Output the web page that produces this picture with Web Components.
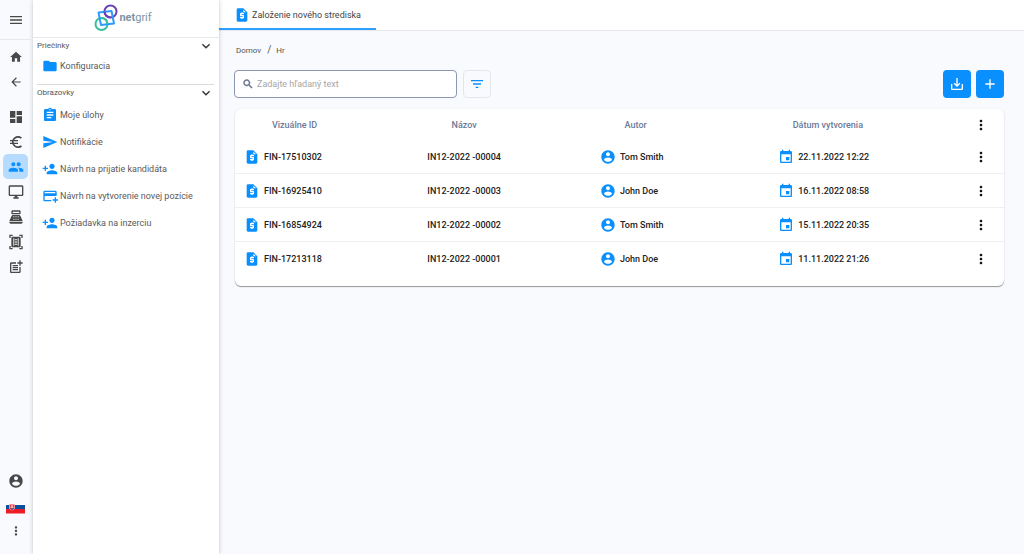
<!DOCTYPE html>
<html lang="sk">
<head>
<meta charset="utf-8">
<title>Netgrif – Založenie nového strediska</title>
<meta name="viewport" content="width=device-width, initial-scale=1">
<style>
  body {
    margin: 0;
    font: 400 9px/12px Roboto, sans-serif;
    color: #555;
    background: #f8fafd;
    --blue: #0a8fff;
    --page: #f8fafd;
    --line: #e6e8ec;
  }
</style>
</head>
<body>
<ng-app></ng-app>

<script>
const ICONS = {
  menu: 'M3 18h18v-2H3v2zm0-5h18v-2H3v2zm0-7v2h18V6H3z',
  home: 'M10 20v-6h4v6h5v-8h3L12 3 2 12h3v8z',
  back: 'M20 11H7.83l5.59-5.59L12 4l-8 8 8 8 1.41-1.41L7.83 13H20v-2z',
  dashboard: 'M3 13h8V3H3v10zm0 8h8v-6H3v6zm10 0h8V11h-8v10zm0-18v6h8V3h-8z',
  euro: 'M15 18.5c-2.51 0-4.68-1.42-5.76-3.5H15v-2H8.58c-.05-.33-.08-.66-.08-1s.03-.67.08-1H15V9H9.24C10.32 6.92 12.5 5.5 15 5.5c1.61 0 3.09.59 4.23 1.57L21 5.3C19.41 3.87 17.3 3 15 3c-3.92 0-7.24 2.51-8.48 6H3v2h3.06c-.04.33-.06.66-.06 1s.02.67.06 1H3v2h3.52c1.24 3.49 4.56 6 8.48 6 2.31 0 4.41-.87 6-2.3l-1.78-1.77c-1.13.98-2.6 1.57-4.22 1.57z',
  people: 'M16 11c1.66 0 2.99-1.34 2.99-3S17.66 5 16 5s-3 1.34-3 3 1.34 3 3 3zm-8 0c1.66 0 2.99-1.34 2.99-3S9.66 5 8 5 5 6.34 5 8s1.34 3 3 3zm0 2c-2.33 0-7 1.17-7 3.5V19h14v-2.5c0-2.33-4.67-3.5-7-3.5zm8 0c-.29 0-.62.02-.97.05 1.16.84 1.97 1.97 1.97 3.45V19h6v-2.5c0-2.33-4.67-3.5-7-3.5z',
  desktop: 'M21 2H3c-1.1 0-2 .9-2 2v12c0 1.1.9 2 2 2h7v2H8v2h8v-2h-2v-2h7c1.1 0 2-.9 2-2V4c0-1.1-.9-2-2-2zm0 14H3V4h18v12z',
  register: 'M17 2H7c-1.1 0-2 .9-2 2v2c0 1.1.9 2 2 2h10c1.1 0 2-.9 2-2V4c0-1.1-.9-2-2-2zm0 4H7V4h10v2zm3 16H4c-1.1 0-2-.9-2-2v-1h20v1c0 1.1-.9 2-2 2zm-1.47-11.81C18.21 9.47 17.49 9 16.7 9H7.3c-.79 0-1.51.47-1.83 1.19L2 18h20l-3.47-7.81zM8 11h1.500v1H8zm0 2h1.500v1H8zm0 2h1.500v1H8zm3.250-4h1.500v1h-1.500zm0 2h1.500v1h-1.500zm0 2h1.500v1h-1.500zM14.500 11H16v1h-1.500zm0 2H16v1h-1.500zm0 2H16v1h-1.500z',
  scanner: 'M7 3H4v3H2V1h5v2zm15 3V1h-5v2h3v3h2zM7 21H4v-3H2v5h5v-2zm13-3v3h-3v2h5v-5h-2zM7 4h10c1.100 0 2 .9 2 2v12c0 1.100-.9 2-2 2H7c-1.100 0-2-.9-2-2V6c0-1.100.9-2 2-2zm1 2.500v11h1.200v-11H8zm6.800 0v11H16v-11h-1.200zM10 8v1.200h4V8h-4zm0 3.400v1.200h4v-1.200h-4zm0 3.400V16h4v-1.200h-4z',
  postAdd: 'M17 19.220H5V7h7V5H5c-1.100 0-2 .9-2 2v12c0 1.100.9 2 2 2h12c1.100 0 2-.9 2-2v-7h-2v7.220zM19 2h-2v3h-3v2h3v3h2V7h3V5h-3V2zM7 9h8v2H7zm0 3h8v2H7zm0 3h8v2H7z',
  account: 'M12 2C6.480 2 2 6.480 2 12s4.480 10 10 10 10-4.480 10-10S17.520 2 12 2zm0 3c1.660 0 3 1.340 3 3s-1.340 3-3 3-3-1.340-3-3 1.340-3 3-3zm0 14.200c-2.500 0-4.710-1.280-6-3.220.03-1.990 4-3.080 6-3.080 1.990 0 5.970 1.090 6 3.080-1.290 1.940-3.500 3.220-6 3.220z',
  more: 'M12 8c1.100 0 2-.9 2-2s-.9-2-2-2-2 .9-2 2 .9 2 2 2zm0 2c-1.100 0-2 .9-2 2s.9 2 2 2 2-.9 2-2-.9-2-2-2zm0 6c-1.100 0-2 .9-2 2s.9 2 2 2 2-.9 2-2-.9-2-2-2z',
  expand: 'M16.590 8.590L12 13.170 7.410 8.590 6 10l6 6 6-6z',
  folder: 'M10 4H4c-1.100 0-1.990.9-1.990 2L2 18c0 1.100.9 2 2 2h16c1.100 0 2-.9 2-2V8c0-1.100-.9-2-2-2h-8l-2-2z',
  tasks: 'M19 3h-4.180C14.400 1.840 13.300 1 12 1s-2.400.84-2.820 2H5c-1.100 0-2 .9-2 2v14c0 1.100.9 2 2 2h14c1.100 0 2-.9 2-2V5c0-1.100-.9-2-2-2zm-7 0c.55 0 1 .45 1 1s-.45 1-1 1-1-.45-1-1 .45-1 1-1zm2 14H7v-2h7v2zm3-4H7v-2h10v2zm0-4H7V7h10v2z',
  send: 'M2.010 21L23 12 2.010 3 2 10l15 2-15 2z',
  personAdd: 'M15 12c2.210 0 4-1.790 4-4s-1.790-4-4-4-4 1.790-4 4 1.790 4 4 4zm-9-2V7H4v3H1v2h3v3h2v-3h3v-2H6zm9 4c-2.670 0-8 1.340-8 4v2h16v-2c0-2.660-5.330-4-8-4z',
  cardAdd: 'M20 4H4c-1.110 0-1.990.89-1.990 2L2 18c0 1.110.89 2 2 2h10v-2H4v-6h18V6c0-1.110-.89-2-2-2zm0 4H4V6h16v2zm4 9v2h-3v3h-2v-3h-3v-2h3v-3h2v3h3z',
  page: 'M14 2H6c-1.100 0-1.990.9-1.990 2L4 20c0 1.100.89 2 1.990 2H18c1.100 0 2-.9 2-2V8l-6-6zm1 9h-4v1h3c.55 0 1 .45 1 1v3c0 .55-.45 1-1 1h-1v1h-2v-1H9v-2h4v-1h-3c-.55 0-1-.45-1-1v-3c0-.55.45-1 1-1h1V8h2v1h2v2zm-1-3V4l4 4h-4z',
  event: 'M17 12h-5v5h5v-5zM16 1v2H8V1H6v2H5c-1.110 0-1.990.9-1.990 2L3 19c0 1.100.89 2 2 2h14c1.100 0 2-.9 2-2V5c0-1.100-.9-2-2-2h-1V1h-2zm3 18H5V8h14v11z',
  search: 'M15.500 14h-.79l-.28-.27C15.410 12.590 16 11.110 16 9.500 16 5.910 13.090 3 9.500 3S3 5.910 3 9.500 5.910 16 9.500 16c1.610 0 3.090-.59 4.230-1.570l.27.28v.79l5 4.990L20.490 19l-4.990-5zm-6 0C7.010 14 5 11.990 5 9.500S7.010 5 9.500 5 14 7.010 14 9.500 11.990 14 9.500 14z',
  filter: 'M10 18h4v-2h-4v2zM3 6v2h18V6H3zm3 7h12v-2H6v2z',
  save: 'M19 12v7H5v-7H3v7c0 1.100.9 2 2 2h14c1.100 0 2-.9 2-2v-7h-2zm-6 .67l2.590-2.580L17 11.500l-5 5-5-5 1.410-1.410L11 12.670V3h2z',
  add: 'M19 13h-6v6h-2v-6H5v-2h6V5h2v6h6v2z'
};

function define(name, render) {
  customElements.define(name, class extends HTMLElement {
    connectedCallback() {
      if (this.shadowRoot) return;
      this.attachShadow({ mode: 'open' }).innerHTML = render(this);
    }
  });
}

/* Filled 24-unit glyph; its size comes from --size, its colour from the text colour. */
define('ng-icon', el => `
  <style>
    :host { display: block; flex: none; width: var(--size, 16px); height: var(--size, 16px); }
    svg { display: block; width: 100%; height: 100%; fill: currentColor; }
    :host([bold]) svg { stroke: currentColor; stroke-width: .8; }
  </style>
  <svg viewBox="0 0 24 24" aria-hidden="true"><path fill-rule="evenodd" d="${ICONS[el.getAttribute('name')]}"/></svg>`);

define('ng-rail-button', el => `
  <style>
    :host { display: block; --size: 14px; }
    button {
      display: grid; place-items: center; width: 25px; height: 25px; padding: 0;
      border: 0; border-radius: 5px; background: none; color: #484848; cursor: pointer;
    }
    :host([wide]) { --size: 16px; }
    :host([active]) button { background: #b5dcff; color: var(--blue); }
  </style>
  <button type="button" aria-label="${el.getAttribute('label')}"><slot></slot></button>`);

define('ng-flag', () => `
  <style>:host { display: block; } svg { display: block; width: 19px; height: 10px; }</style>
  <svg viewBox="0 0 19 10" role="img" aria-label="Slovensko">
    <path fill="#fff" d="M0 0h19v3H0z"/><path fill="#0b4ea2" d="M0 1h19v5H0z"/><path fill="#ee1c25" d="M0 5h19v4.500H0z"/>
    <path fill="#fff" d="M3 0h6v3.200q0 2-3 3.300-3-1.300-3-3.300z"/>
    <path fill="#ee1c25" d="M3.500.4h5v2.800q0 1.600-2.500 2.700-2.500-1.100-2.500-2.700z"/>
    <path stroke="#fff" stroke-width=".7" d="M6 1v4M4.800 2h2.400M4.400 3.300h3.200"/>
    <path fill="#0b4ea2" d="M4.300 4.700q.8-1 1.700-.1.900-.9 1.700.1L6 5.900z"/>
  </svg>`);

define('ng-rail', () => `
  <style>
    :host { display: flex; flex-direction: column; align-items: center; padding-right: 2px; background: var(--page); }
    header { align-self: stretch; display: flex; justify-content: center; padding: 7px 0; border-bottom: 1px solid var(--line); }
    nav { display: grid; justify-items: center; }
    .top { margin-top: 4px; }
    .apps { margin-top: 10px; }
    .user { margin-top: auto; padding-bottom: 11px; }
    .lang { display: grid; place-items: center; height: 25px; padding: 6px 0 0; border: 0; background: none; }
  </style>
  <header><ng-rail-button wide label="Menu"><ng-icon name="menu"></ng-icon></ng-rail-button></header>
  <nav class="top" aria-label="Navigácia">
    <ng-rail-button label="Domov"><ng-icon name="home"></ng-icon></ng-rail-button>
    <ng-rail-button label="Späť"><ng-icon name="back"></ng-icon></ng-rail-button>
  </nav>
  <nav class="apps" aria-label="Aplikácie">
    <ng-rail-button wide label="Prehľad"><ng-icon name="dashboard"></ng-icon></ng-rail-button>
    <ng-rail-button wide label="Financie"><ng-icon name="euro"></ng-icon></ng-rail-button>
    <ng-rail-button wide active label="Ľudia"><ng-icon name="people"></ng-icon></ng-rail-button>
    <ng-rail-button wide label="Počítače"><ng-icon name="desktop"></ng-icon></ng-rail-button>
    <ng-rail-button wide label="Pokladňa"><ng-icon name="register"></ng-icon></ng-rail-button>
    <ng-rail-button wide label="Skenovanie"><ng-icon name="scanner"></ng-icon></ng-rail-button>
    <ng-rail-button wide label="Nový záznam"><ng-icon name="postAdd"></ng-icon></ng-rail-button>
  </nav>
  <nav class="user" aria-label="Používateľ">
    <ng-rail-button wide label="Profil"><ng-icon name="account"></ng-icon></ng-rail-button>
    <button class="lang" type="button" aria-label="Jazyk"><ng-flag></ng-flag></button>
    <ng-rail-button label="Viac"><ng-icon name="more"></ng-icon></ng-rail-button>
  </nav>`);

define('ng-logo', () => `
  <style>
    :host { display: flex; align-items: center; gap: 1px; font-size: 11px; line-height: 16px; color: #7d95a3; }
    svg { display: block; width: 24px; height: 28px; fill: none; stroke-width: 2; }
    b { font-weight: 700; }
  </style>
  <svg viewBox="0 0 24 28" aria-hidden="true">
    <circle cx="16.500" cy="7.500" r="6" stroke="#6a3fb5"/>
    <circle cx="7.500" cy="20" r="6" stroke="#38bfa0"/>
    <path stroke="#2f9bff" stroke-linejoin="round" d="M4.500 8.500L17.500 7l2.500 12.500L7 21z"/>
    <path stroke="#6a3fb5" d="M10.500 7.500a6 6 0 0 0 6 6"/>
    <path stroke="#38bfa0" d="M13.500 20a6 6 0 0 0-6-6"/>
  </svg>
  <span><b>net</b>grif</span>`);

define('ng-nav-link', el => `
  <style>
    :host { display: block; }
    a { display: flex; align-items: center; gap: 2px; padding: 0 0 0 5px; height: var(--row, 27px); color: #5a5a5a; text-decoration: none; }
    ng-icon { color: var(--blue); }
  </style>
  <a href="#"><ng-icon name="${el.getAttribute('icon')}"></ng-icon><slot></slot></a>`);

define('ng-nav-group', el => `
  <style>
    :host { display: block; margin: 0 5px 0 4px; }
    button {
      display: flex; align-items: center; justify-content: space-between; width: 100%; height: 15px;
      padding: 0; border: 0; background: none; color: #555; font: inherit; font-size: 8px;
    }
    ng-icon { color: #333; }
  </style>
  <button type="button" aria-expanded="true">${el.getAttribute('label')}<ng-icon name="expand"></ng-icon></button>
  <slot></slot>`);

define('ng-sidebar', () => `
  <style>
    :host { display: block; position: relative; background: #fff; box-shadow: 0 0 4px rgba(40, 50, 70, .28); }
    header { display: flex; justify-content: center; padding: 4px 6px 5px 0; border-bottom: 1px solid var(--line); }
    .folders { --row: 26px; padding-bottom: 5px; border-bottom: 1px solid #dcdcdc; }
    .views { --row: 27px; }
    .views ng-nav-link:first-of-type { padding-top: 1px; }
  </style>
  <header><ng-logo></ng-logo></header>
  <nav>
    <ng-nav-group class="folders" label="Priečinky"><ng-nav-link icon="folder">Konfiguracia</ng-nav-link></ng-nav-group>
    <ng-nav-group class="views" label="Obrazovky">
      <ng-nav-link icon="tasks">Moje úlohy</ng-nav-link>
      <ng-nav-link icon="send">Notifikácie</ng-nav-link>
      <ng-nav-link icon="personAdd">Návrh na prijatie kandidáta</ng-nav-link>
      <ng-nav-link icon="cardAdd">Návrh na vytvorenie novej pozície</ng-nav-link>
      <ng-nav-link icon="personAdd">Požiadavka na inzerciu</ng-nav-link>
    </ng-nav-group>
  </nav>`);

define('ng-tabs', () => `
  <style>
    :host { display: flex; height: 30px; background: #fff; border-bottom: 1px solid var(--line); }
    button {
      display: flex; align-items: center; gap: 2px; padding: 2px 15px 0; border: 0;
      border-bottom: 2px solid #2f9fff; background: none; color: #444; font: inherit;
    }
    ng-icon { color: var(--blue); }
  </style>
  <button type="button" role="tab" aria-selected="true"><ng-icon name="page"></ng-icon><slot></slot></button>`);

define('ng-breadcrumb', () => `
  <style>
    :host { display: block; font-size: 8px; }
    ol { display: flex; align-items: baseline; gap: 6px; margin: 0; padding: 0 0 0 2px; list-style: none; }
    a { color: inherit; text-decoration: none; }
    li + li::before { content: "/"; padding-right: 5px; font-size: 10px; line-height: 10px; }
  </style>
  <nav aria-label="Cesta"><ol><li><a href="#">Domov</a></li><li><a href="#">Hr</a></li></ol></nav>`);

define('ng-toolbar', () => `
  <style>
    :host { display: flex; align-items: center; gap: 6px; }
    .search {
      display: flex; align-items: center; gap: 3px; box-sizing: border-box; width: 29%; height: 28px;
      padding: 0 6px 0 7px; border: 1px solid #8b97b0; border-radius: 4px; background: #fff; color: #5c6b8a; --size: 12px;
    }
    input { flex: 1; min-width: 0; padding: 0; border: 0; outline: 0; background: none; font: inherit; color: #333; }
    input::placeholder { color: #a6a6a6; opacity: 1; }
    button {
      display: grid; place-items: center; width: 28px; height: 28px; padding: 0; border: 0;
      border-radius: 4px; background: var(--blue); color: #fff;
    }
    .filter { border: 1px solid #e3e6ec; background: var(--page); color: var(--blue); }
    .actions { display: flex; gap: 5px; margin-left: auto; }
  </style>
  <label class="search"><ng-icon bold name="search"></ng-icon><input type="text" aria-label="Hľadať" placeholder="Zadajte hľadaný text"></label>
  <button class="filter" type="button" aria-label="Filter"><ng-icon name="filter"></ng-icon></button>
  <div class="actions">
    <button type="button" aria-label="Stiahnuť"><ng-icon name="save"></ng-icon></button>
    <button type="button" aria-label="Pridať"><ng-icon name="add"></ng-icon></button>
  </div>`);

const CASES = [
  ['FIN-17510302', 'IN12-2022 -00004', 'Tom Smith', '22.11.2022 12:22'],
  ['FIN-16925410', 'IN12-2022 -00003', 'John Doe', '16.11.2022 08:58'],
  ['FIN-16854924', 'IN12-2022 -00002', 'Tom Smith', '15.11.2022 20:35'],
  ['FIN-17213118', 'IN12-2022 -00001', 'John Doe', '11.11.2022 21:26']
];

define('ng-case-table', () => {
  const more = '<button type="button" aria-label="Možnosti"><ng-icon name="more"></ng-icon></button>';
  const rows = CASES.map(([id, name, author, date]) => `
    <tr>
      <td><span class="cell id"><ng-icon name="page"></ng-icon>${id}</span></td>
      <td class="name">${name}</td>
      <td><span class="cell author"><ng-icon name="account"></ng-icon>${author}</span></td>
      <td><span class="cell date"><ng-icon name="event"></ng-icon>${date}</span></td>
      <td>${more}</td>
    </tr>`).join('');
  return `
  <style>
    :host {
      display: block; margin-left: 1px; padding-bottom: 10px; border-radius: 6px; background: #fff;
      box-shadow: 0 1px 1px rgba(0, 0, 0, .4), 0 0 2px rgba(0, 0, 0, .06);
    }
    table { width: 100%; table-layout: fixed; border-collapse: separate; border-spacing: 0; }
    th, td { box-sizing: border-box; padding: 0; }
    th { height: 31px; font-weight: 500; color: #6b7a99; }
    td { height: 34px; font-weight: 500; color: #222; border-bottom: 1px solid #eeeff1; }
    tr:last-child td { border-bottom: 0; }
    .name { text-align: center; }
    .cell { display: flex; align-items: center; gap: 4px; }
    .cell ng-icon { color: var(--blue); }
    .id { padding-left: 9px; }
    .author { gap: 4px; padding-left: 21%; }
    .date { padding-left: 31%; }
    button { display: block; margin: 0 auto; padding: 0; border: 0; background: none; color: #111; }
  </style>
  <table>
    <colgroup><col style="width:15.5%"><col style="width:28.6%"><col style="width:16%"><col style="width:34%"><col style="width:5.9%"></colgroup>
    <thead><tr><th>Vizuálne ID</th><th>Názov</th><th>Autor</th><th>Dátum vytvorenia</th><th>${more}</th></tr></thead>
    <tbody>${rows}</tbody>
  </table>`;
});

define('ng-app', () => `
  <style>
    :host { display: grid; grid-template-columns: 33px 186px minmax(0, 1fr); min-height: 100vh; }
    ng-sidebar { z-index: 1; }
    .content { display: grid; padding: 14px 20px 20px 15px; }
    ng-toolbar { margin: 13px 0 11px; }
  </style>
  <ng-rail></ng-rail>
  <ng-sidebar></ng-sidebar>
  <main>
    <ng-tabs>Založenie nového strediska</ng-tabs>
    <div class="content">
      <ng-breadcrumb></ng-breadcrumb>
      <ng-toolbar></ng-toolbar>
      <ng-case-table></ng-case-table>
    </div>
  </main>`);
</script>
</body>
</html>
